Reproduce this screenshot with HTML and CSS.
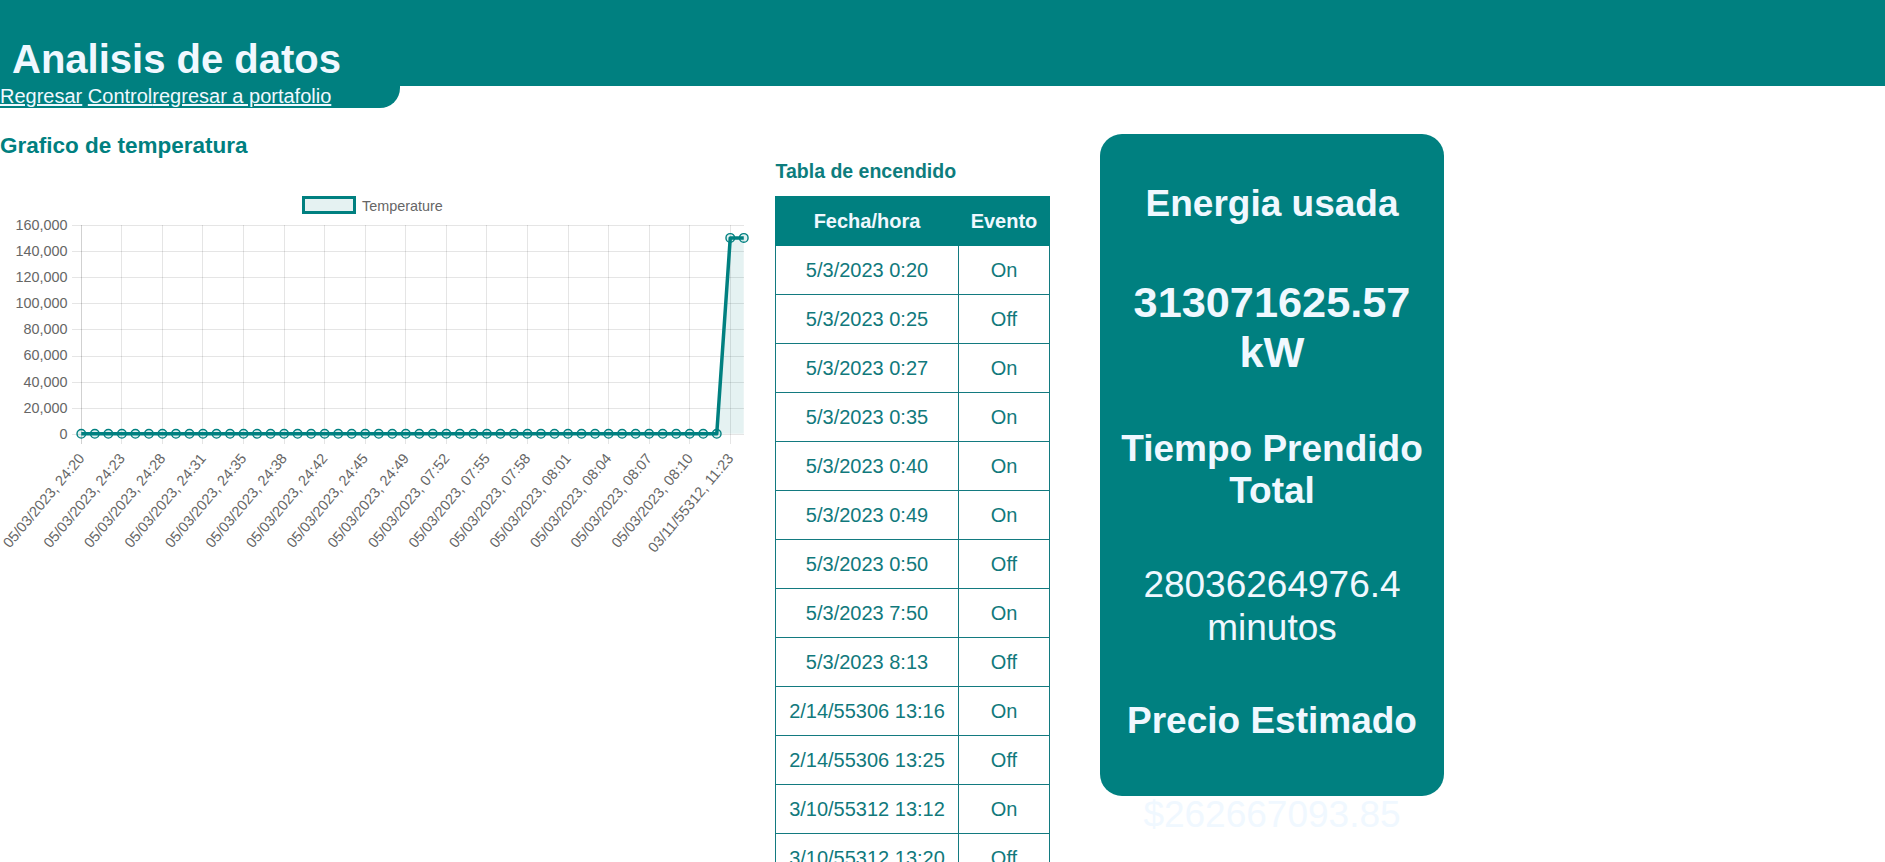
FILE: index.html
```html
<!DOCTYPE html>
<html lang="es">
<head>
<meta charset="utf-8">
<title>Analisis de datos</title>
<link rel="stylesheet" href="styles.css">
</head>
<body>
<header class="header">
  <h1 class="title">Analisis de datos</h1>
  <nav class="nav"><a href="#">Regresar</a> <a href="#">Control</a><a href="#">regresar a portafolio</a></nav>
</header>
<main class="main">
  <section class="chart-col">
    <h3 class="chart-title">Grafico de temperatura</h3>
    <svg class="chart" viewBox="0 0 775 402" xmlns="http://www.w3.org/2000/svg">
      <defs>
        <marker id="pt" markerWidth="12" markerHeight="12" refX="6" refY="6" markerUnits="userSpaceOnUse">
          <circle cx="6" cy="6" r="4.3" fill="rgba(0,128,128,0.12)" stroke="#008080" stroke-width="1.4"/>
        </marker>
      </defs>
      <g transform="translate(0,-158.5)">
        <rect x="303.5" y="197" width="51" height="15" fill="rgba(0,128,128,0.1)" stroke="#008080" stroke-width="3"/>
        <text class="legend" x="362" y="210">Temperature</text>
        <g class="grid" shape-rendering="crispEdges">
          <line x1="71.5" y1="224.5" x2="744" y2="224.5"/>
          <line x1="71.5" y1="250.5" x2="744" y2="250.5"/>
          <line x1="71.5" y1="276.5" x2="744" y2="276.5"/>
          <line x1="71.5" y1="302.5" x2="744" y2="302.5"/>
          <line x1="71.5" y1="328.5" x2="744" y2="328.5"/>
          <line x1="71.5" y1="355.5" x2="744" y2="355.5"/>
          <line x1="71.5" y1="381.5" x2="744" y2="381.5"/>
          <line x1="71.5" y1="407.5" x2="744" y2="407.5"/>
          <line x1="71.5" y1="433.5" x2="744" y2="433.5"/>
          <line x1="121.5" y1="224" x2="121.5" y2="443"/>
          <line x1="162.5" y1="224" x2="162.5" y2="443"/>
          <line x1="202.5" y1="224" x2="202.5" y2="443"/>
          <line x1="243.5" y1="224" x2="243.5" y2="443"/>
          <line x1="284.5" y1="224" x2="284.5" y2="443"/>
          <line x1="324.5" y1="224" x2="324.5" y2="443"/>
          <line x1="365.5" y1="224" x2="365.5" y2="443"/>
          <line x1="405.5" y1="224" x2="405.5" y2="443"/>
          <line x1="446.5" y1="224" x2="446.5" y2="443"/>
          <line x1="486.5" y1="224" x2="486.5" y2="443"/>
          <line x1="527.5" y1="224" x2="527.5" y2="443"/>
          <line x1="568.5" y1="224" x2="568.5" y2="443"/>
          <line x1="608.5" y1="224" x2="608.5" y2="443"/>
          <line x1="649.5" y1="224" x2="649.5" y2="443"/>
          <line x1="689.5" y1="224" x2="689.5" y2="443"/>
          <line x1="730.5" y1="224" x2="730.5" y2="443"/>
        </g>
        <line class="axis" x1="81.5" y1="224" x2="81.5" y2="443" shape-rendering="crispEdges"/>
        <g class="ylab">
          <text x="67.5" y="224.3">160,000</text>
          <text x="67.5" y="250.4">140,000</text>
          <text x="67.5" y="276.6">120,000</text>
          <text x="67.5" y="302.7">100,000</text>
          <text x="67.5" y="328.8">80,000</text>
          <text x="67.5" y="354.9">60,000</text>
          <text x="67.5" y="381.1">40,000</text>
          <text x="67.5" y="407.2">20,000</text>
          <text x="67.5" y="433.3">0</text>
        </g>
        <g class="xlab">
          <text transform="translate(81.5,455) rotate(-50)">05/03/2023, 24:20</text>
          <text transform="translate(122,455) rotate(-50)">05/03/2023, 24:23</text>
          <text transform="translate(162.5,455) rotate(-50)">05/03/2023, 24:28</text>
          <text transform="translate(203,455) rotate(-50)">05/03/2023, 24:31</text>
          <text transform="translate(243.5,455) rotate(-50)">05/03/2023, 24:35</text>
          <text transform="translate(284,455) rotate(-50)">05/03/2023, 24:38</text>
          <text transform="translate(324.5,455) rotate(-50)">05/03/2023, 24:42</text>
          <text transform="translate(365,455) rotate(-50)">05/03/2023, 24:45</text>
          <text transform="translate(406,455) rotate(-50)">05/03/2023, 24:49</text>
          <text transform="translate(446.5,455) rotate(-50)">05/03/2023, 07:52</text>
          <text transform="translate(487,455) rotate(-50)">05/03/2023, 07:55</text>
          <text transform="translate(527.5,455) rotate(-50)">05/03/2023, 07:58</text>
          <text transform="translate(568,455) rotate(-50)">05/03/2023, 08:01</text>
          <text transform="translate(608.5,455) rotate(-50)">05/03/2023, 08:04</text>
          <text transform="translate(649,455) rotate(-50)">05/03/2023, 08:07</text>
          <text transform="translate(690,455) rotate(-50)">05/03/2023, 08:10</text>
          <text transform="translate(730.5,455) rotate(-50)">03/11/55312, 11:23</text>
        </g>
        <polygon points="716.74,433.3 730.26,237.4 743.78,237.4 743.78,433.3" fill="rgba(0,128,128,0.1)"/>
        <polyline class="series" marker-start="url(#pt)" marker-mid="url(#pt)" marker-end="url(#pt)"
          points="81.3,433.3 94.82,433.3 108.34,433.3 121.86,433.3 135.38,433.3 148.9,433.3 162.42,433.3 175.94,433.3 189.46,433.3 202.98,433.3 216.5,433.3 230.02,433.3 243.54,433.3 257.06,433.3 270.58,433.3 284.1,433.3 297.62,433.3 311.14,433.3 324.66,433.3 338.18,433.3 351.7,433.3 365.22,433.3 378.74,433.3 392.26,433.3 405.78,433.3 419.3,433.3 432.82,433.3 446.34,433.3 459.86,433.3 473.38,433.3 486.9,433.3 500.42,433.3 513.94,433.3 527.46,433.3 540.98,433.3 554.5,433.3 568.02,433.3 581.54,433.3 595.06,433.3 608.58,433.3 622.1,433.3 635.62,433.3 649.14,433.3 662.66,433.3 676.18,433.3 689.7,433.3 703.22,433.3 716.74,433.3 730.26,237.4 743.78,237.4"/>
      </g>
    </svg>
  </section>

  <section class="table-col">
    <h3 class="table-title">Tabla de encendido</h3>
    <table class="events">
      <thead>
        <tr><th class="c1">Fecha/hora</th><th class="c2">Evento</th></tr>
      </thead>
      <tbody>
        <tr><td>5/3/2023 0:20</td><td>On</td></tr>
        <tr><td>5/3/2023 0:25</td><td>Off</td></tr>
        <tr><td>5/3/2023 0:27</td><td>On</td></tr>
        <tr><td>5/3/2023 0:35</td><td>On</td></tr>
        <tr><td>5/3/2023 0:40</td><td>On</td></tr>
        <tr><td>5/3/2023 0:49</td><td>On</td></tr>
        <tr><td>5/3/2023 0:50</td><td>Off</td></tr>
        <tr><td>5/3/2023 7:50</td><td>On</td></tr>
        <tr><td>5/3/2023 8:13</td><td>Off</td></tr>
        <tr><td>2/14/55306 13:16</td><td>On</td></tr>
        <tr><td>2/14/55306 13:25</td><td>Off</td></tr>
        <tr><td>3/10/55312 13:12</td><td>On</td></tr>
        <tr><td>3/10/55312 13:20</td><td>Off</td></tr>
      </tbody>
    </table>
  </section>

  <aside class="card">
    <h2 class="stat-label">Energia usada</h2>
    <h2 class="stat-big">313071625.57 kW</h2>
    <h2 class="stat-label">Tiempo Prendido Total</h2>
    <p class="stat-value">28036264976.4 minutos</p>
    <h2 class="stat-label">Precio Estimado</h2>
    <p class="stat-value">$262667093.85</p>
  </aside>
</main>
</body>
</html>
```

FILE: styles.css
```css
html {
  overflow: hidden;
}

body {
  margin: 0;
  background: #ffffff;
  font-family: "Liberation Sans", Arial, sans-serif;
}

/* header */
.title {
  margin: 0;
  padding: 36px 0 4px 12px;
  background: #008080;
  font-size: 40px;
  line-height: 46px;
  font-weight: bold;
  color: #f0f8ff;
}

.nav {
  background: #008080;
  width: 400px;
  height: 22px;
  border-bottom-right-radius: 20px;
  font-size: 20px;
  line-height: 21px;
}

.nav a {
  color: #f0f8ff;
}

/* layout */
.main {
  display: flex;
  align-items: flex-start;
}

/* chart */
.chart-col {
  flex: none;
  width: 775px;
}

.chart-title {
  margin: 24.5px 0 0;
  font-size: 22.5px;
  line-height: 26px;
  font-weight: bold;
  color: #008080;
}

.chart {
  display: block;
  width: 775px;
  height: 402px;
  font-family: "Liberation Sans", Arial, sans-serif;
}

.chart .grid line {
  stroke: rgba(0, 0, 0, 0.1);
  stroke-width: 1;
}

.chart .axis {
  stroke: rgba(0, 0, 0, 0.18);
  stroke-width: 1;
}

.chart .legend {
  font-size: 14.4px;
  fill: #666666;
}

.chart .ylab text {
  font-size: 14.4px;
  fill: #666666;
  text-anchor: end;
  dominant-baseline: central;
}

.chart .xlab text {
  font-size: 14.6px;
  fill: #666666;
  text-anchor: end;
  dominant-baseline: central;
}

.chart .series {
  fill: none;
  stroke: #008080;
  stroke-width: 3.5;
  stroke-linejoin: round;
}

/* table */
.table-col {
  flex: none;
  margin-top: 51.5px;
}

.table-title {
  margin: 0 0 14.5px 0.5px;
  font-size: 19.5px;
  line-height: 22px;
  font-weight: bold;
  color: #0d7d7d;
}

.events {
  border-collapse: collapse;
  font-size: 20px;
  color: #11797c;
}

.events th,
.events td {
  border: 1px solid #137a80;
  height: 48px;
  padding: 0;
  text-align: center;
  vertical-align: middle;
  line-height: 23px;
}

.events th {
  background: #008080;
  border-color: #008080;
  color: #f0f8ff;
  font-weight: bold;
}

.events .c1 {
  width: 182px;
}

.events .c2 {
  width: 90px;
}

/* summary card */
.card {
  flex: none;
  box-sizing: border-box;
  width: 344px;
  height: 662px;
  margin: 26px 0 0 50px;
  padding: 49px 16px 0;
  background: #008080;
  border-radius: 22px;
  color: #f0f8ff;
  text-align: center;
  display: flex;
  flex-direction: column;
  gap: 51.2px;
}

.card > * {
  flex-shrink: 0;
  margin: 0;
}

.stat-label {
  font-size: 37px;
  line-height: 42.5px;
  font-weight: bold;
}

.stat-big {
  font-size: 43.3px;
  line-height: 50px;
  font-weight: bold;
}

.stat-value {
  font-size: 37px;
  line-height: 42.5px;
  font-weight: normal;
}
```
